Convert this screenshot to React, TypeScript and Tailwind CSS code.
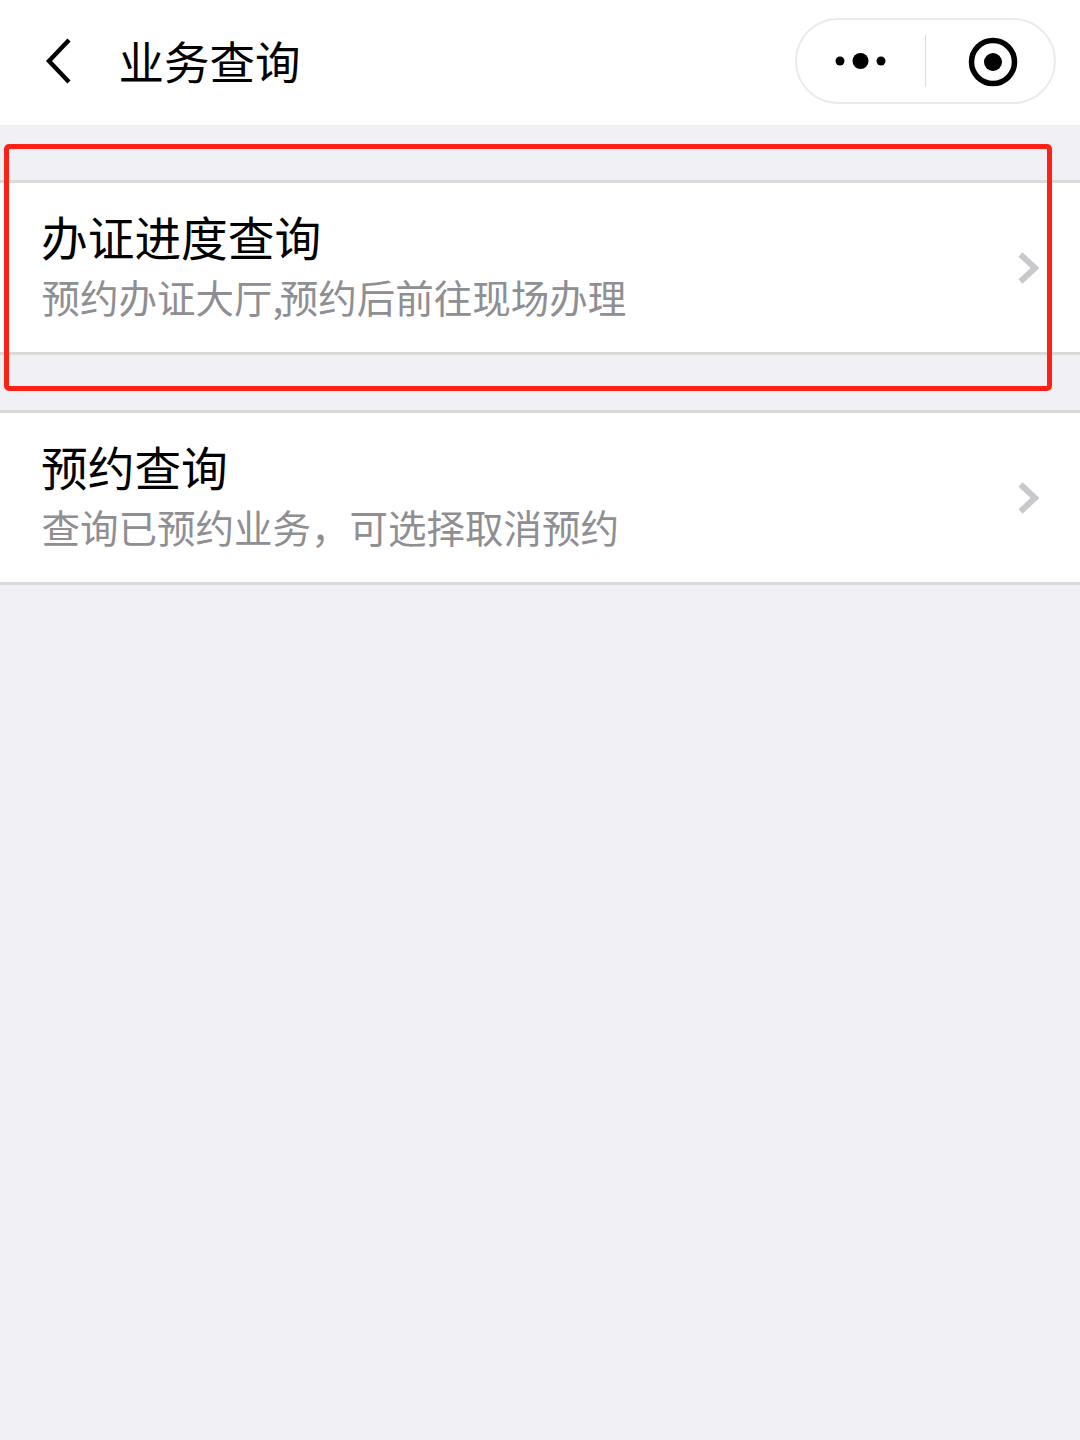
import type { ReactNode } from "react";

const font = { fontFamily: '"Noto Sans CJK SC", "Noto Sans", sans-serif' };

function Chevron() {
  return (
    <svg width="24" height="34" viewBox="0 0 24 34" fill="none" className="shrink-0">
      <path d="M3.5 3.5 L18 17 L3.5 30.5" stroke="#c8c8cd" strokeWidth="6" strokeLinecap="butt" />
    </svg>
  );
}

function Row({ title, sub }: { title: string; sub: ReactNode }) {
  return (
    <div className="flex h-[175px] items-center justify-between border-y-[3px] border-[#d9d9d9] bg-white pl-[41px] pr-[39px]">
      <div className="flex flex-col pb-[4px]">
        <div className="text-[46.7px] leading-[60px] text-black">{title}</div>
        <div className="pl-[0.5px] pt-[1px] text-[38.5px] leading-[58px] text-[#8e8e93]">{sub}</div>
      </div>
      <Chevron />
    </div>
  );
}

export default function App() {
  return (
    <div className="relative flex h-[1440px] w-[1080px] flex-col overflow-hidden bg-[#efeff4]" style={font}>
      <header className="flex h-[125px] items-center justify-between bg-white pb-[3px] pl-[44.5px] pr-[24px]">
        <div className="flex items-center">
          <svg width="28" height="46" viewBox="0 0 28 46" fill="none">
            <path d="M24 2 L4 23 L24 44" stroke="#000" strokeWidth="4.4" />
          </svg>
          <div className="ml-[46px] pb-[3px] text-[45.5px] leading-[60px] text-black">业务查询</div>
        </div>
        <div className="flex h-[86px] w-[261px] items-center rounded-full border-2 border-[#ebebeb] bg-white">
          <div className="flex w-[128px] items-center justify-center pr-[1px]">
            <svg width="52" height="18" viewBox="0 0 52 18" fill="#000">
              <circle cx="5" cy="9" r="4.5" />
              <circle cx="25.5" cy="9" r="8" />
              <circle cx="46" cy="9" r="4.5" />
            </svg>
          </div>
          <div className="h-[52px] w-[1px] bg-[#dcdcdc]" />
          <div className="flex flex-1 items-center justify-center pl-[4px]">
            <svg width="48" height="48" viewBox="0 0 48 48" fill="none" className="overflow-visible">
              <circle cx="25" cy="25" r="21.5" stroke="#000" strokeWidth="5.5" />
              <circle cx="25" cy="25" r="9" fill="#000" />
            </svg>
          </div>
        </div>
      </header>

      <div className="mt-[55px] flex flex-col gap-[55px]">
        <Row
          title="办证进度查询"
          sub={
            <>
              预约办证大厅<span className="tracking-[-3.5px]">,</span>预约后前往现场办理
            </>
          }
        />
        <Row title="预约查询" sub="查询已预约业务，可选择取消预约" />
      </div>

      <div className="pointer-events-none absolute left-[4px] top-[144px] h-[247px] w-[1048px] rounded-[5px] border-[5px] border-[#ff2116]" />
    </div>
  );
}
